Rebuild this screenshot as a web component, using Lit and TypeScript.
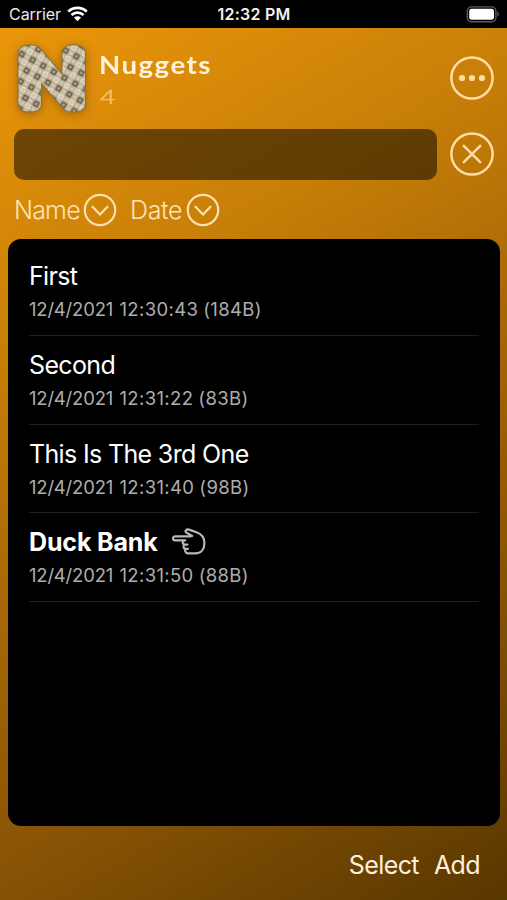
import { LitElement, html, css, nothing } from "lit";
import { customElement } from "lit/decorators.js";

interface Nugget {
  title: string;
  date: string;
  time: string;
  size: string;
  current?: boolean;
}

const NUGGETS: Nugget[] = [
  { title: "First", date: "12/4/2021", time: "12:30:43", size: "(184B)" },
  { title: "Second", date: "12/4/2021", time: "12:31:22", size: "(83B)" },
  { title: "This Is The 3rd One", date: "12/4/2021", time: "12:31:40", size: "(98B)" },
  { title: "Duck Bank", date: "12/4/2021", time: "12:31:50", size: "(88B)", current: true },
];

const chevron = html`<svg class="chev" width="34" height="34" viewBox="0 0 34 34">
  <circle cx="17" cy="17" r="15.2"/><path d="M9.5 13.8 L17 21.6 L24.5 13.8"/>
</svg>`;

@customElement("app-root")
export class AppRoot extends LitElement {
  static styles = css`
    :host {
      display: flex;
      flex-direction: column;
      width: 507px;
      height: 900px;
      overflow: hidden;
      font-family: Inter, "Liberation Sans", sans-serif;
      color: #fff;
      background: #000;
    }
    svg { display: block; flex: none; }
    .status {
      height: 28px;
      flex: none;
      display: grid;
      grid-template-columns: 1fr auto 1fr;
      align-items: center;
      padding: 0 8px 0 9px;
      box-sizing: border-box;
      font-size: 16px;
      color: #e8e8e8;
    }
    .carrier { display: flex; align-items: center; gap: 6px; letter-spacing: -0.05px; }
    .clock { font-weight: 600; color: #f2f2f2; letter-spacing: 0.25px; }
    .battery { justify-self: end; }
    .screen {
      flex: 1;
      display: flex;
      flex-direction: column;
      background: linear-gradient(149.8deg, #ea960a 0%, #c98008 27%, #ad6b06 46%, #845104 75%, #583700 100%);
    }
    .header { height: 101px; display: flex; box-sizing: border-box; padding: 12px 13px 0 14px; }
    .titles { margin-left: 8px; padding-top: 9px; flex: 1; font-family: Lato, sans-serif; }
    .name, .count { width: max-content; transform-origin: left; }
    .name { font-size: 24px; line-height: 32px; font-weight: 700; color: #fff3dc; letter-spacing: 1.3px; transform: scaleX(1.15); margin-left: -1px; }
    .count { font-size: 19px; line-height: 24px; margin-top: 4px; color: #f6bd70; transform: scaleX(1.4); }
    .round { fill: none; stroke: #ffdca6; stroke-width: 2.5; stroke-linecap: round; }
    .header .round { margin-top: 15px; }
    .dots { fill: #ffdca6; stroke: none; }
    .search { display: flex; height: 51px; padding: 0 13px 0 14px; justify-content: space-between; }
    .field { width: 423px; border-radius: 10px; background: rgba(0, 0, 0, 0.51); }
    .search .round { margin-top: 3px; }
    .sorts { height: 59px; display: flex; align-items: center; padding: 0 0 0 14px; box-sizing: border-box; font-size: 25px; font-weight: 300; color: #ffe3b8; }
    .sort { display: flex; align-items: center; gap: 3px; }
    .sort.date { margin-left: 13px; }
    .lname { letter-spacing: -0.8px; width: 66px; }
    .ldate { letter-spacing: -0.3px; width: 53px; }
    .chev { fill: none; stroke: #ffe0b0; stroke-width: 2.2; stroke-linecap: round; stroke-linejoin: round; }
    .list { margin: 0 7px 0 8px; height: 587px; border-radius: 13px; background: #000; padding: 8px 21px 0 21px; box-sizing: border-box; }
    .row { height: 88.75px; box-sizing: border-box; border-bottom: 1.5px solid #1f1f1f; padding-top: 13px; }
    .title { display: flex; align-items: center; height: 32px; font-size: 25px; gap: 13px; white-space: nowrap; letter-spacing: -0.65px; }
    .current { font-weight: 700; letter-spacing: -0.15px; }
    .detail { display: flex; margin-top: 5px; line-height: 24px; font-size: 18.5px; color: #adadad; white-space: nowrap; }
    .day { width: 90.5px; letter-spacing: -0.2px; }
    .time { margin-right: 5px; letter-spacing: 0.35px; }
    .size { letter-spacing: 0.35px; }
    .hand { fill: none; stroke: #b8b8b8; stroke-width: 2.2; stroke-linejoin: round; stroke-linecap: round; }
    .footer { flex: 1; display: flex; justify-content: flex-end; align-items: center; gap: 15px; padding: 4px 27px 0 0; font-size: 25px; color: #fff0dd; letter-spacing: -0.6px; }
    .logo { margin: -14px 0 0 -8px; filter: drop-shadow(0 2px 5px rgba(80, 45, 0, 0.4)); }
    .glyph, .edge { font: 200 70px Inter, sans-serif; stroke-linejoin: round; }
    .glyph { fill: url(#quilt); stroke: url(#quilt); stroke-width: 15; }
    .edge { fill: #84724e; stroke: #84724e; stroke-width: 16.8; }
  `;

  private logo() {
    return html`<svg class="logo" width="86" height="108" viewBox="-8 -14 86 108">
      <defs>
        <pattern id="quilt" x="-2" y="5" width="12.2" height="12.2" patternUnits="userSpaceOnUse" patternTransform="rotate(29)">
          <rect width="12.2" height="12.2" fill="#c0b59b"/>
          <rect x="1.4" y="1.4" width="4.2" height="4.2" fill="#b3a88d" stroke="#6a5e48" stroke-width="1.6"/>
          <circle cx="9.6" cy="9.6" r="2.3" fill="#cbc0a8" stroke="#e2dac6" stroke-width="1.5"/>
          <circle cx="9.6" cy="3.5" r="1.5" fill="#d6cdb6"/>
          <circle cx="3.5" cy="9.6" r="1.5" fill="#d6cdb6"/>
        </pattern>
      </defs>
      <text class="edge" x="4.7" y="63.6" textLength="66" lengthAdjust="spacingAndGlyphs">N</text>
      <text class="glyph" x="4.7" y="63.6" textLength="66" lengthAdjust="spacingAndGlyphs">N</text>
    </svg>`;
  }

  private hand() {
    return html`<svg class="hand" width="36" height="28" viewBox="0 0 36 28">
      <path d="M17 8.3 H4.2 C1.2 8.3 1.2 12.3 4.2 12.3 H14.2 M14.2 12.3 C11 12.5 11 16.4 14 16.6 M16.5 16.6 H14 C11.8 17 12.2 20.7 14.6 20.8 M17 20.8 H14.8 C13.4 22 14.4 25.4 17 25.4 H24.5 C30.5 25.4 33.4 20.8 33.4 15.2 C33.4 9.4 30.4 6 25.6 4.3 L18 1.6 C15.2 0.8 13.3 3.6 15.6 4.8 L21.2 7.9 C20.4 8.4 19 8.3 17 8.3"/>
    </svg>`;
  }

  render() {
    return html`
      <div class="status">
        <div class="carrier">
          <span>Carrier</span>
          <svg width="21" height="16" viewBox="0 0 21 16">
            <g fill="none" stroke="#fff" stroke-width="2.7">
              <path d="M1.2 5.6 C6.4 .5 14.6 .5 19.8 5.6"/>
              <path d="M4.5 9 C7.9 5.8 13.1 5.8 16.5 9"/>
            </g>
            <path fill="#fff" d="M10.5 15.2 L7 11.6 C9 9.9 12 9.9 14 11.6 Z"/>
          </svg>
        </div>
        <span class="clock">12:32 PM</span>
        <svg class="battery" width="33" height="17" viewBox="0 0 33 17">
          <rect x="1.3" y=".9" width="28.6" height="14.8" rx="4.2" fill="none" stroke="#5c5c5c" stroke-width="1.4"/>
          <rect x="3.2" y="2.8" width="24.8" height="11" rx="2.4" fill="#fff"/>
          <path fill="#5c5c5c" d="M31.3 5.6 C33.3 6.4 33.3 10 31.3 10.8 Z"/>
        </svg>
      </div>
      <div class="screen">
        <div class="header">
          ${this.logo()}
          <div class="titles">
            <div class="name">Nuggets</div>
            <div class="count">4</div>
          </div>
          <svg class="round" width="44" height="45" viewBox="0 0 44 45">
            <circle cx="22" cy="23" r="20.6"/>
            <g class="dots"><circle cx="12" cy="23" r="3.1"/><circle cx="22" cy="23" r="3.1"/><circle cx="32" cy="23" r="3.1"/></g>
          </svg>
        </div>
        <div class="search">
          <div class="field"></div>
          <svg class="round" width="44" height="45" viewBox="0 0 44 45">
            <circle cx="22" cy="22" r="20.6"/>
            <path d="M13.8 13.8 L30.2 30.2 M30.2 13.8 L13.8 30.2"/>
          </svg>
        </div>
        <div class="sorts">
          <div class="sort"><span class="lname">Name</span>${chevron}</div>
          <div class="sort date"><span class="ldate">Date</span>${chevron}</div>
        </div>
        <div class="list">
          ${NUGGETS.map(
            (n) => html`<div class="row">
              <div class="title"><span class=${n.current ? "current" : ""}>${n.title}</span>${n.current ? this.hand() : nothing}</div>
              <div class="detail"><span class="day">${n.date}</span><span class="time">${n.time}</span><span class="size">${n.size}</span></div>
            </div>`
          )}
        </div>
        <div class="footer"><span>Select</span><span>Add</span></div>
      </div>
    `;
  }
}
